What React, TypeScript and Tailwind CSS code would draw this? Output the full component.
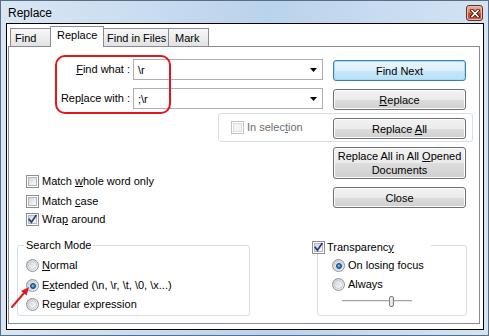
import React from "react";

const U = ({ children }: { children: React.ReactNode }) => (
  <span className="underline decoration-1 underline-offset-[1px]">{children}</span>
);

function Chk({ checked = false, disabled = false }: { checked?: boolean; disabled?: boolean }) {
  return (
    <span
      className={
        "relative inline-block w-[13px] h-[13px] shrink-0 border bg-white " +
        (disabled ? "border-[#c2c4c6]" : "border-[#8e8f8f]")
      }
    >
      <span
        className={
          "absolute left-[1px] top-[1px] w-[9px] h-[9px] border " +
          (disabled
            ? "border-[#dcdee0] bg-[#f4f4f4]"
            : "border-[#b4b8be] bg-[linear-gradient(135deg,#d3d7dc_0%,#eceef0_60%,#f8f8f8_100%)]")
        }
      />
      {checked && (
        <svg className="absolute left-[-1px] top-[-1px]" width="13" height="13" viewBox="0 0 13 13">
          <path d="M3.2 6.4 L5.4 9.2 L9.9 2.6" fill="none" stroke="#2c3f7a" strokeWidth="1.7" strokeLinecap="square" />
        </svg>
      )}
    </span>
  );
}

function Radio({ checked = false }: { checked?: boolean }) {
  return (
    <span className="relative inline-block w-[13px] h-[13px] shrink-0 rounded-full border border-[#8f9397] bg-[radial-gradient(circle_at_70%_70%,#fbfbfb_0%,#e6e7e9_45%,#c6c9cd_100%)]">
      <span className="absolute left-[1px] top-[1px] w-[9px] h-[9px] rounded-full border border-[#c8cbcf] bg-[radial-gradient(circle_at_35%_35%,#d9dce0_0%,#f3f4f5_70%,#ffffff_100%)]" />
      {checked && (
        <span className="absolute left-[2.5px] top-[2.5px] w-[6px] h-[6px] rounded-full border border-[#113f6e] bg-[radial-gradient(circle_at_45%_45%,#9fd8fb_0%,#2e8ad0_45%,#134f8c_100%)]" />
      )}
    </span>
  );
}

function Btn({
  children,
  def = false,
  className = "",
  h = "h-[21px]",
}: {
  children: React.ReactNode;
  def?: boolean;
  className?: string;
  h?: string;
}) {
  return (
    <div
      className={
        "w-[133px] shrink-0 rounded-[3px] border flex flex-col items-center justify-center leading-[14px] text-center text-black " +
        h +
        " " +
        (def
          ? "border-[#3c7fb1] bg-[linear-gradient(to_bottom,#e8f5fc_0%,#dcf0fb_50%,#c8e7f8_51%,#b9e0f5_100%)] shadow-[inset_0_0_0_1px_#a8dcf6]"
          : "border-[#707070] bg-[linear-gradient(to_bottom,#f2f2f2_0%,#ebebeb_50%,#dddddd_51%,#cfcfcf_100%)] shadow-[inset_0_0_0_1px_#fcfcfc]") +
        " " +
        className
      }
    >
      {children}
    </div>
  );
}

function Combo({ value, className = "" }: { value: string; className?: string }) {
  return (
    <div
      className={
        "w-[190px] h-[21px] border border-[#abb0b8] bg-white flex items-center pl-[4px] pr-[5px] " + className
      }
    >
      <span className="leading-[14px]">{value}</span>
      <svg className="ml-auto" width="7" height="4" viewBox="0 0 7 4">
        <path d="M0 0 H7 L3.5 4 Z" fill="#000" />
      </svg>
    </div>
  );
}

function Tab({
  label,
  w,
  pl,
  selected = false,
  first = false,
}: {
  label: string;
  w: string;
  pl: string;
  selected?: boolean;
  first?: boolean;
}) {
  return (
    <div
      className={
        "border border-b-0 border-[#898c95] flex items-start leading-[14px] " +
        w +
        " " +
        pl +
        " " +
        (first ? "" : "ml-[-1px] ") +
        (selected
          ? "relative z-10 h-[21px] mb-[-1px] bg-white pt-[1px]"
          : "h-[18px] pt-[2px] bg-[linear-gradient(to_bottom,#f6f6f6_0%,#ededed_50%,#e2e2e2_100%)]")
      }
    >
      {label}
    </div>
  );
}

export default function App() {
  return (
    <div className="relative w-[489px] h-[336px] border border-[#5b6d84] bg-[linear-gradient(to_right,#d9e6f4_0%,#c9dcf0_30%,#b9d3ec_55%,#c6daf0_75%,#d3e3f4_100%)] flex flex-col overflow-hidden font-['Liberation_Sans',Arial,sans-serif] text-[11px] text-black">
      {/* Title bar */}
      <div className="h-[22px] shrink-0 flex items-start justify-between">
        <span className="pl-[7px] pt-[5px] text-[12px] leading-[14px] text-black">Replace</span>
        <div className="mt-[4px] mr-[5px] w-[17px] h-[16px] rounded-[3px] border border-[#5e3226] bg-[linear-gradient(to_bottom,#eab4a6_0%,#dd7a62_45%,#c94326_55%,#d4603f_100%)] shadow-[inset_0_0_0_1px_#f0b8a8] flex items-center justify-center">
          <svg width="10" height="9" viewBox="0 0 10 9">
            <path d="M2 1.5 L8 7.5 M8 1.5 L2 7.5" stroke="#3a1a12" strokeWidth="3.4" strokeLinecap="square" />
            <path d="M2 1.5 L8 7.5 M8 1.5 L2 7.5" stroke="#ffffff" strokeWidth="1.6" strokeLinecap="square" />
          </svg>
        </div>
      </div>

      {/* Client area */}
      <div className="ml-[5px] mr-[4px] mb-[5px] flex-1 border border-black bg-white pl-px pr-[3px] pt-[2px] pb-[5px] flex flex-col">
        <div className="h-[20px] shrink-0 flex items-end pl-[2px]">
          <Tab label="Find" w="w-[41px]" pl="pl-[4px]" first />
          <Tab label="Replace" w="w-[54px]" pl="pl-[6px]" selected />
          <Tab label="Find in Files" w="w-[66px]" pl="pl-[3px]" />
          <Tab label="Mark" w="w-[41px]" pl="pl-[6px]" />
        </div>

        <div className="flex-1 border border-[#898c95] bg-white flex flex-col">
          {/* Row A */}
          <div className="flex items-start mt-[12px]">
            <div className="w-[121px] h-[21px] leading-[21px] text-right">
              <U>F</U>ind what :
            </div>
            <Combo value={"\\r"} className="ml-[3px]" />
            <Btn def className="ml-[10px] mt-[1px]">
              Find Next
            </Btn>
          </div>

          {/* Row B */}
          <div className="flex items-start mt-[7px]">
            <div className="w-[121px] h-[21px] leading-[21px] text-right">
              Rep<U>l</U>ace with :
            </div>
            <Combo value={";\\r"} className="ml-[3px]" />
            <Btn className="ml-[10px] mt-[1px]">
              <span>
                <U>R</U>eplace
              </span>
            </Btn>
          </div>

          {/* Row C: in selection group */}
          <div className="ml-[209px] mt-[3px] w-[255px] h-[29px] rounded-[3px] border border-[#d5dfe5] flex items-center pl-[12px] pr-[6px]">
            <Chk disabled />
            <span className="ml-[3px] leading-[13px] text-[#6d6d6d]">
              In selec<U>t</U>ion
            </span>
            <Btn className="ml-auto self-start mt-[4px]">
              <span>
                Replace <U>A</U>ll
              </span>
            </Btn>
          </div>

          {/* Row D */}
          <div className="flex items-start">
            <div className="ml-[17px] w-[307px] mt-[33px] flex flex-col">
              <div className="flex items-center h-[13px]">
                <Chk />
                <span className="ml-[3px] leading-[13px]">
                  Match <U>w</U>hole word only
                </span>
              </div>
              <div className="flex items-center h-[13px] mt-[7px]">
                <Chk />
                <span className="ml-[3px] leading-[13px]">
                  Match <U>c</U>ase
                </span>
              </div>
              <div className="flex items-center h-[13px] mt-[5px]">
                <Chk checked />
                <span className="ml-[3px] leading-[13px]">
                  Wra<U>p</U> around
                </span>
              </div>
            </div>
            <div className="mt-[5px] flex flex-col">
              <Btn h="h-[32px]">
                <span>
                  Replace All in All <U>O</U>pened
                </span>
                <span>Documents</span>
              </Btn>
              <Btn className="mt-[8px]">Close</Btn>
            </div>
          </div>

          {/* Row E */}
          <div className="flex items-start mt-[19px]">
            <div className="relative ml-[8px] w-[233px] h-[71px] rounded-[3px] border border-[#d5dfe5] pl-[8px] pt-[13px] flex flex-col">
              <span className="absolute left-[6px] top-[-7px] px-[2px] bg-white leading-[13px]">Search Mode</span>
              <div className="flex items-center h-[13px]">
                <Radio />
                <span className="ml-[3px] leading-[13px]">
                  <U>N</U>ormal
                </span>
              </div>
              <div className="flex items-center h-[13px] mt-[7px]">
                <Radio checked />
                <span className="ml-[3px] leading-[13px]">
                  E<U>x</U>tended (\n, \r, \t, \0, \x...)
                </span>
              </div>
              <div className="flex items-center h-[13px] mt-[6px]">
                <Radio />
                <span className="ml-[3px] leading-[13px]">
                  Re<U>g</U>ular expression
                </span>
              </div>
            </div>

            <div className="relative ml-[67px] w-[150px] h-[71px] rounded-[3px] border border-[#d5dfe5] pl-[14px] pt-[13px] flex flex-col">
              <div className="absolute left-[-8px] top-[-6px] w-[121px] h-[14px] bg-white flex items-center pl-[2px]">
                <Chk checked />
                <span className="ml-[2px] leading-[13px]">
                  Transparenc<U>y</U>
                </span>
              </div>
              <div className="flex items-center h-[13px]">
                <Radio checked />
                <span className="ml-[3px] leading-[13px]">On losing focus</span>
              </div>
              <div className="flex items-center h-[13px] mt-[6px]">
                <Radio />
                <span className="ml-[3px] leading-[13px]">Always</span>
              </div>
              <div className="relative ml-[10px] mt-[5px] w-[70px] h-[11px]">
                <div className="absolute left-0 right-0 top-[4px] h-px bg-[#a3a6aa]" />
                <div className="absolute left-0 right-0 top-[5px] h-px bg-[#e4e6e8]" />
                <div className="absolute left-[47px] top-0 w-[5px] h-[11px] rounded-[2px] border border-[#7b7f84] bg-[linear-gradient(to_right,#f6f6f6,#d9dbde)]" />
              </div>
            </div>
          </div>
        </div>
      </div>

      {/* Annotation overlays */}
      <div className="absolute left-[54px] top-[54px] w-[116px] h-[59px] rounded-[10px] border-2 border-[#e3161b]" />
      <svg className="absolute left-[10px] top-[285px]" width="22" height="24" viewBox="0 0 22 24">
        <path d="M1 21 L13.5 6.5" stroke="#e3161b" strokeWidth="2" strokeLinecap="round" />
        <path d="M18 1 L15.6 9.4 L10.1 4.9 Z" fill="#e3161b" />
      </svg>
    </div>
  );
}
